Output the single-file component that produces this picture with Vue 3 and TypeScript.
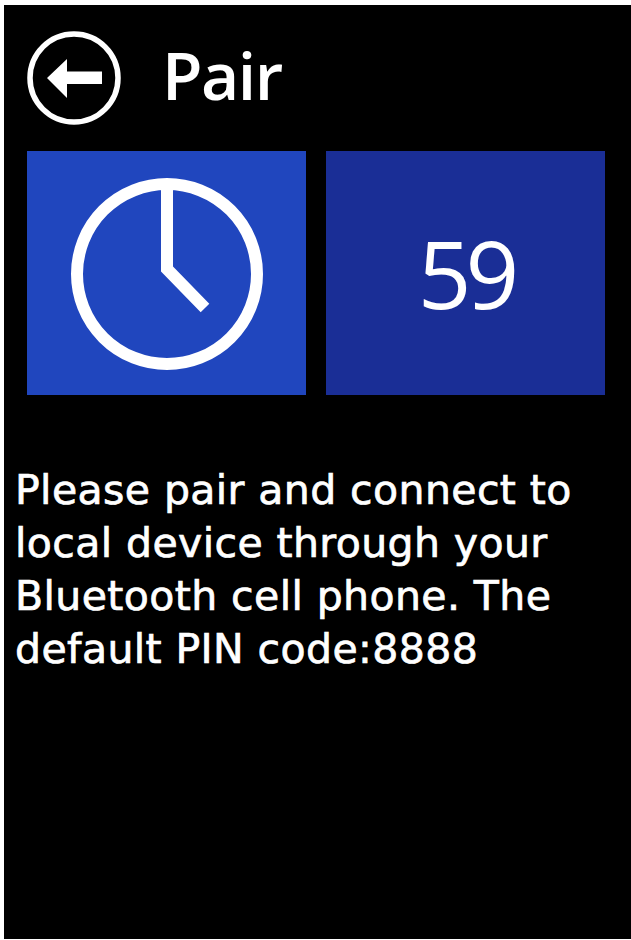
<script setup lang="ts">
const seconds = 59
const lines = [
  'Please pair and connect to',
  'local device through your',
  'Bluetooth cell phone. The',
  'default PIN code:8888'
]
</script>

<template>
  <div class="screen">
    <header class="top">
      <svg class="back" width="94" height="94" viewBox="0 0 94 94" fill="none">
        <circle cx="47" cy="47" r="44" stroke="#fff" stroke-width="5.5" />
        <path d="M20 47 L40 28 V40.5 H75 V53 H40 V67 Z" fill="#fff" />
      </svg>
      <h1 class="title">Pair</h1>
    </header>
    <div class="tiles">
      <div class="tile clock">
        <svg width="192" height="192" viewBox="0 0 192 192" fill="none">
          <circle cx="96" cy="96" r="90" stroke="#fff" stroke-width="12" />
          <path d="M96 8 V91 L134 130" stroke="#fff" stroke-width="12" />
        </svg>
      </div>
      <div class="tile count">{{ seconds }}</div>
    </div>
    <p class="msg">
      <span v-for="line in lines" :key="line">{{ line }}</span>
    </p>
  </div>
</template>

<style>
html,
body {
  margin: 0;
  background: #fff;
}
</style>

<style scoped>
.screen {
  box-sizing: border-box;
  width: 627px;
  height: 934px;
  margin: 5px 0 0 4px;
  padding: 25px 26px 0 23px;
  background: #000;
  color: #fff;
  overflow: hidden;
}

.top {
  display: flex;
  align-items: center;
  gap: 41px;
  height: 96px;
}

.back {
  flex: none;
  margin-top: -1px;
}

.title {
  margin: -8px 0 0;
  font: 600 66px/96px "Open Sans", sans-serif;
  letter-spacing: -1.5px;
}

.tiles {
  display: flex;
  gap: 20px;
  margin-top: 25px;
}

.tile {
  display: flex;
  align-items: center;
  justify-content: center;
  width: 279px;
  height: 244px;
}

.clock {
  background: #2046be;
  padding-top: 2px;
  box-sizing: border-box;
}

.count {
  background: #1a2e96;
  font: 500 94px/1 "Open Sans", sans-serif;
  letter-spacing: -6px;
}

.msg {
  margin: 69px 0 0 -12px;
  font: 400 41px/53px "DejaVu Sans", sans-serif;
  letter-spacing: 0.4px;
  -webkit-text-stroke: 0.7px #fff;
}

.msg span {
  display: block;
  white-space: nowrap;
}
</style>
